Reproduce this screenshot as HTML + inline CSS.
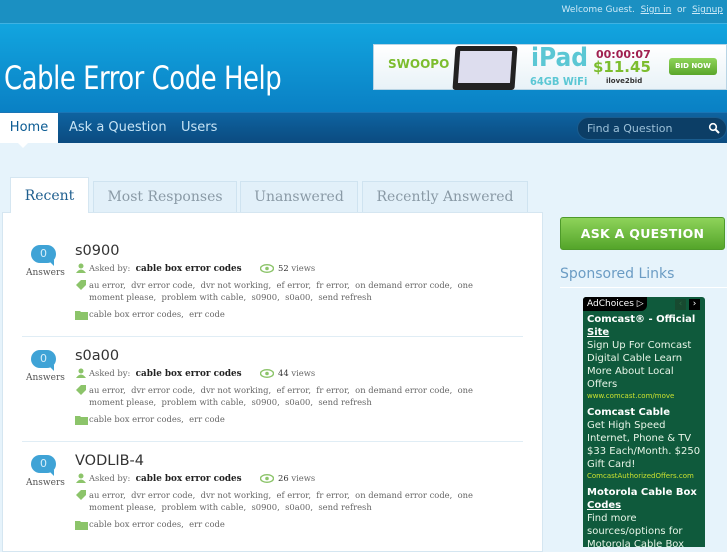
<!DOCTYPE html>
<html><head><meta charset="utf-8"><style>
*{margin:0;padding:0;box-sizing:border-box}
body{width:727px;height:545px;overflow:hidden;background:#e6f3fb;font-family:"DejaVu Sans","Liberation Sans",sans-serif;position:relative}
.a{position:absolute;white-space:nowrap}
#top{left:0;top:0;width:727px;height:24px;background:#1b90c2;border-bottom:1px solid #3fb2e2}
#hdr{left:0;top:24px;width:727px;height:88px;background:linear-gradient(#12a5df,#0a80c4)}
#nav{left:0;top:112px;width:727px;height:31px;background:linear-gradient(#0e63a0,#0b4b80);border-top:1px solid #1a75b5}
.tab{border:1px solid #cfe3f0;border-bottom:none;background:#e2f0f9;font-family:"DejaVu Serif","Liberation Serif",serif;font-size:14px;color:#8a9aa6;text-align:center;line-height:30px}
.serif{font-family:"DejaVu Serif","Liberation Serif",serif}
.sm{font-size:8.4px;color:#666}
.ad{color:#e8f5e8;font-size:10px;line-height:13px}
</style></head><body>
<div class="a" id="top"></div>
<div class="a" style="right:4px;top:5px;font-size:9px;color:#cde9f7">Welcome Guest. &nbsp;<u>Sign in</u> &nbsp;or &nbsp;<u>Signup</u></div>
<div class="a" id="hdr"></div>
<div class="a" style="left:4px;top:59px;font-family:'DejaVu Sans Condensed','DejaVu Sans',sans-serif;font-size:32px;color:#fff;letter-spacing:-0.5px;transform:scaleX(0.9);transform-origin:0 0">Cable Error Code Help</div>
<div class="a" style="left:373px;top:44px;width:354px;height:46px;background:linear-gradient(#fff,#e8f2f7);border:1px solid #b8d4e4">
 <div class="a" style="left:14px;top:12px;font-weight:bold;font-size:12px;color:#7cbd2e">SWOOPO</div>
 <div class="a" style="left:80px;top:1px;width:62px;height:44px;background:#222;border-radius:3px;transform:skewX(-4deg)"><div style="margin:5px;height:32px;background:#dde"></div></div>
 <div class="a" style="left:157px;top:-2px;font-size:26px;font-weight:bold;color:#5bc7d4;font-family:'DejaVu Sans Condensed',sans-serif">iPad</div>
 <div class="a" style="left:156px;top:30px;font-size:11px;font-weight:bold;color:#5bc7d4;font-family:'DejaVu Sans Condensed',sans-serif">64GB WiFi</div>
 <div class="a" style="left:222px;top:3px;font-size:11px;font-weight:bold;color:#a02050">00:00:07</div>
 <div class="a" style="left:219px;top:13px;font-size:15px;font-weight:bold;color:#7cbd2e">$11.45</div>
 <div class="a" style="left:232px;top:32px;font-size:7px;font-weight:bold;color:#333">ilove2bid</div>
 <div class="a" style="left:295px;top:13px;width:48px;height:17px;background:linear-gradient(#8fd45a,#5aa62a);border-radius:3px;color:#fff;font-size:7px;font-weight:bold;text-align:center;line-height:17px">BID NOW</div>
</div>
<div class="a" id="nav"></div>
<div class="a" style="left:0;top:113px;width:58px;height:30px;background:#fff;color:#0b5b93;font-size:13px;line-height:30px;text-align:center">Home</div>
<div class="a" style="left:18px;top:143px;width:0;height:0;border-left:5px solid transparent;border-right:5px solid transparent;border-top:5px solid #fff"></div>
<div class="a" style="left:69px;top:113px;color:#c5e3f5;font-size:13px;line-height:30px">Ask a Question</div>
<div class="a" style="left:181px;top:113px;color:#c5e3f5;font-size:13px;line-height:30px">Users</div>
<div class="a" style="left:577px;top:117px;width:150px;height:23px;border-radius:12px;background:#0c3e66;border:1px solid #1a5c8e;color:#9cc0d8;font-size:11px;line-height:21px;padding-left:9px">Find a Question</div>
<svg class="a" style="left:708px;top:122px" width="12" height="12"><circle cx="5" cy="5" r="3.3" stroke="#fff" stroke-width="1.6" fill="none"/><line x1="7.5" y1="7.5" x2="11" y2="11" stroke="#fff" stroke-width="2"/></svg>

<div class="a" style="left:2px;top:212px;width:541px;height:340px;background:#fff;border:1px solid #d5e6f1"></div>
<div class="a tab" style="left:10px;top:177px;width:79px;height:36px;background:#fff;color:#1f5f8f;line-height:36px;border-color:#d5e6f1">Recent</div>
<div class="a tab" style="left:93px;top:181px;width:144px;height:31px">Most Responses</div>
<div class="a tab" style="left:240px;top:181px;width:118px;height:31px">Unanswered</div>
<div class="a tab" style="left:362px;top:181px;width:166px;height:31px">Recently Answered</div>

<div class="a" style="left:22px;top:336px;width:501px;height:1px;background:#e0edf5"></div>
<div class="a" style="left:22px;top:441px;width:501px;height:1px;background:#e0edf5"></div>

<div class="a" style="left:560px;top:217px;width:165px;height:33px;border-radius:3px;background:linear-gradient(#8ed35a,#54a52a);border:1px solid #4e9a2a;color:#fff;font-weight:bold;font-size:12.5px;text-align:center;line-height:31px;letter-spacing:0.3px">ASK A QUESTION</div>
<div class="a" style="left:560px;top:266px;font-size:14px;color:#6b9cc4">Sponsored Links</div>
<div class="a" style="left:560px;top:287px;width:167px;height:1px;background:#fff"></div>
<div class="a" style="left:583px;top:297px;width:122px;height:250px;background:#0f5a3c;border-radius:3px 3px 0 0;overflow:hidden">
 <div class="a" style="left:0;top:0;width:64px;height:14px;background:#000;color:#fff;font-size:9px;line-height:14px;padding-left:4px;border-bottom-right-radius:6px">AdChoices ▷</div>
 <div class="a" style="left:92px;top:2px;width:11px;height:11px;background:#174a30;color:#2a6a44;font-size:9px;line-height:11px;text-align:center">‹</div>
 <div class="a" style="left:106px;top:2px;width:11px;height:11px;background:#000;color:#fff;font-size:9px;line-height:11px;text-align:center">›</div>
 <div class="a" style="left:4px;top:16px;white-space:normal;width:118px">
  <div class="ad" style="font-weight:bold;color:#fff">Comcast® - Official <u>Site</u></div>
  <div class="ad">Sign Up For Comcast Digital Cable Learn More About Local Offers</div>
  <div style="font-size:7px;color:#c8e030;line-height:11px">www.comcast.com/move</div>
  <div class="ad" style="font-weight:bold;color:#fff;margin-top:4px">Comcast Cable</div>
  <div class="ad">Get High Speed Internet, Phone &amp; TV $33&nbsp;Each/Month.&nbsp;$250 Gift Card!</div>
  <div style="font-size:7px;color:#c8e030;line-height:11px">ComcastAuthorizedOffers.com</div>
  <div class="ad" style="font-weight:bold;color:#fff;margin-top:4px">Motorola Cable Box <u>Codes</u></div>
  <div class="ad">Find more sources/options for Motorola Cable Box</div>
 </div>
</div>

<!-- Item 1 -->
<div class="a" style="left:0;top:240px;width:540px;height:100px">
 <div class="a" style="left:31px;top:5px;width:25px;height:18px;background:#3fa3d6;border-radius:9px;color:#d8eef9;font-size:11px;text-align:center;line-height:18px">0</div>
 <div class="a" style="left:48px;top:20px;width:0;height:0;border-top:6px solid #3fa3d6;border-left:6px solid transparent"></div>
 <div class="a serif sm" style="left:26px;top:28px;font-size:9px;color:#555">Answers</div>
 <div class="a" style="left:75px;top:3px;font-size:14.5px;color:#333">s0900</div>
 <svg class="a" style="left:75px;top:23px" width="12" height="10"><circle cx="6" cy="3" r="2.5" fill="#8cc46a"/><path d="M1 10 Q6 3 11 10Z" fill="#8cc46a"/></svg>
 <div class="a serif sm" style="left:89px;top:23px">Asked by: &nbsp;<b style="color:#222;font-size:8.8px">cable box error codes</b></div>
 <svg class="a" style="left:260px;top:24px" width="14" height="9"><ellipse cx="7" cy="4.5" rx="6.5" ry="3.8" fill="none" stroke="#8cc46a" stroke-width="1.4"/><circle cx="7" cy="4.5" r="1.8" fill="#8cc46a"/></svg>
 <div class="a serif sm" style="left:278px;top:23px"><span style="color:#333">52</span> views</div>
 <svg class="a" style="left:75px;top:40px" width="12" height="11"><path d="M1 5 L6 0 L11 0 L11 5 L6 10Z" fill="#8cc46a"/></svg>
 <div class="a serif sm" style="left:89px;top:40px;line-height:11.5px">au error, &nbsp;dvr error code, &nbsp;dvr not working, &nbsp;ef error, &nbsp;fr error, &nbsp;on demand error code, &nbsp;one<br>moment please, &nbsp;problem with cable, &nbsp;s0900, &nbsp;s0a00, &nbsp;send refresh</div>
 <svg class="a" style="left:75px;top:70px" width="13" height="10"><path d="M0 1 H5 L6 2 H13 V10 H0Z" fill="#8cc46a"/></svg>
 <div class="a serif sm" style="left:89px;top:69px">cable box error codes, &nbsp;err code</div>
</div>
<!-- Item 2 -->
<div class="a" style="left:0;top:345px;width:540px;height:100px">
 <div class="a" style="left:31px;top:5px;width:25px;height:18px;background:#3fa3d6;border-radius:9px;color:#d8eef9;font-size:11px;text-align:center;line-height:18px">0</div>
 <div class="a" style="left:48px;top:20px;width:0;height:0;border-top:6px solid #3fa3d6;border-left:6px solid transparent"></div>
 <div class="a serif sm" style="left:26px;top:28px;font-size:9px;color:#555">Answers</div>
 <div class="a" style="left:75px;top:3px;font-size:14.5px;color:#333">s0a00</div>
 <svg class="a" style="left:75px;top:23px" width="12" height="10"><circle cx="6" cy="3" r="2.5" fill="#8cc46a"/><path d="M1 10 Q6 3 11 10Z" fill="#8cc46a"/></svg>
 <div class="a serif sm" style="left:89px;top:23px">Asked by: &nbsp;<b style="color:#222;font-size:8.8px">cable box error codes</b></div>
 <svg class="a" style="left:260px;top:24px" width="14" height="9"><ellipse cx="7" cy="4.5" rx="6.5" ry="3.8" fill="none" stroke="#8cc46a" stroke-width="1.4"/><circle cx="7" cy="4.5" r="1.8" fill="#8cc46a"/></svg>
 <div class="a serif sm" style="left:278px;top:23px"><span style="color:#333">44</span> views</div>
 <svg class="a" style="left:75px;top:40px" width="12" height="11"><path d="M1 5 L6 0 L11 0 L11 5 L6 10Z" fill="#8cc46a"/></svg>
 <div class="a serif sm" style="left:89px;top:40px;line-height:11.5px">au error, &nbsp;dvr error code, &nbsp;dvr not working, &nbsp;ef error, &nbsp;fr error, &nbsp;on demand error code, &nbsp;one<br>moment please, &nbsp;problem with cable, &nbsp;s0900, &nbsp;s0a00, &nbsp;send refresh</div>
 <svg class="a" style="left:75px;top:70px" width="13" height="10"><path d="M0 1 H5 L6 2 H13 V10 H0Z" fill="#8cc46a"/></svg>
 <div class="a serif sm" style="left:89px;top:69px">cable box error codes, &nbsp;err code</div>
</div>
<!-- Item 3 -->
<div class="a" style="left:0;top:450px;width:540px;height:100px">
 <div class="a" style="left:31px;top:5px;width:25px;height:18px;background:#3fa3d6;border-radius:9px;color:#d8eef9;font-size:11px;text-align:center;line-height:18px">0</div>
 <div class="a" style="left:48px;top:20px;width:0;height:0;border-top:6px solid #3fa3d6;border-left:6px solid transparent"></div>
 <div class="a serif sm" style="left:26px;top:28px;font-size:9px;color:#555">Answers</div>
 <div class="a" style="left:75px;top:3px;font-size:14.5px;color:#333">VODLIB-4</div>
 <svg class="a" style="left:75px;top:23px" width="12" height="10"><circle cx="6" cy="3" r="2.5" fill="#8cc46a"/><path d="M1 10 Q6 3 11 10Z" fill="#8cc46a"/></svg>
 <div class="a serif sm" style="left:89px;top:23px">Asked by: &nbsp;<b style="color:#222;font-size:8.8px">cable box error codes</b></div>
 <svg class="a" style="left:260px;top:24px" width="14" height="9"><ellipse cx="7" cy="4.5" rx="6.5" ry="3.8" fill="none" stroke="#8cc46a" stroke-width="1.4"/><circle cx="7" cy="4.5" r="1.8" fill="#8cc46a"/></svg>
 <div class="a serif sm" style="left:278px;top:23px"><span style="color:#333">26</span> views</div>
 <svg class="a" style="left:75px;top:40px" width="12" height="11"><path d="M1 5 L6 0 L11 0 L11 5 L6 10Z" fill="#8cc46a"/></svg>
 <div class="a serif sm" style="left:89px;top:40px;line-height:11.5px">au error, &nbsp;dvr error code, &nbsp;dvr not working, &nbsp;ef error, &nbsp;fr error, &nbsp;on demand error code, &nbsp;one<br>moment please, &nbsp;problem with cable, &nbsp;s0900, &nbsp;s0a00, &nbsp;send refresh</div>
 <svg class="a" style="left:75px;top:70px" width="13" height="10"><path d="M0 1 H5 L6 2 H13 V10 H0Z" fill="#8cc46a"/></svg>
 <div class="a serif sm" style="left:89px;top:69px">cable box error codes, &nbsp;err code</div>
</div>
</body></html>
